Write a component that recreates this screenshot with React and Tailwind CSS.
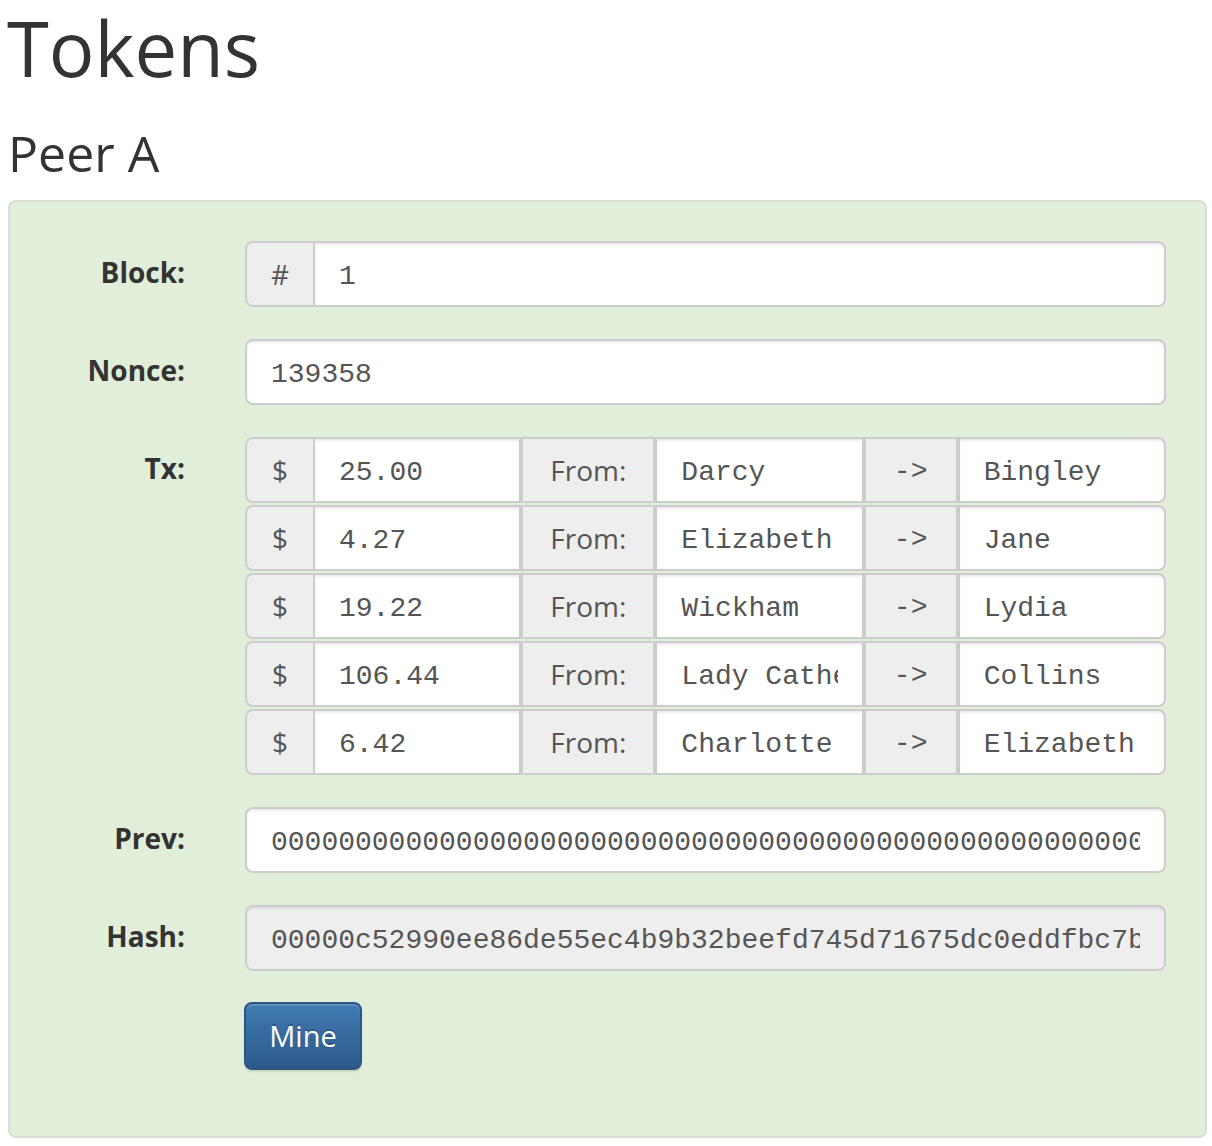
import React from "react";

const txs = [
  { amount: "25.00", from: "Darcy", to: "Bingley" },
  { amount: "4.27", from: "Elizabeth", to: "Jane" },
  { amount: "19.22", from: "Wickham", to: "Lydia" },
  { amount: "106.44", from: "Lady Catherine", to: "Collins" },
  { amount: "6.42", from: "Charlotte", to: "Elizabeth" },
];

const mono = "font-['Liberation_Mono','Courier_New',monospace] text-[28px] text-[#555]";

function Field({ value, className = "" }) {
  return (
    <div
      className={`flex items-center h-full min-w-0 px-[24px] pt-[6px] border-2 border-[#ccc] shadow-[inset_0_2px_2px_rgba(0,0,0,0.075)] ${mono} ${className}`}
    >
      <div className="flex-1 min-w-0 overflow-hidden whitespace-nowrap">{value}</div>
    </div>
  );
}

function Addon({ children, className = "" }) {
  return (
    <div
      className={`flex items-center justify-center shrink-0 h-full bg-[#eee] border-2 border-[#ccc] text-[#555] text-[28px] ${className}`}
    >
      {children}
    </div>
  );
}

function Row({ label, children }) {
  return (
    <div className="flex gap-[60px]">
      <div className="w-[175px] shrink-0 text-right font-bold text-[28px] leading-[40px] pt-[11px] text-[#333]">
        {label}
      </div>
      <div className="flex-1 min-w-0">{children}</div>
    </div>
  );
}

export default function App() {
  return (
    <div className="pl-[8px] pr-[5px] font-['Open_Sans',sans-serif] text-[#333] bg-white min-h-[1146px]">
      <h1 className="text-[76px] leading-[84px] pt-[6px] -ml-[1px] font-normal">Tokens</h1>
      <h3 className="text-[50px] leading-[55px] mt-[36px] font-normal">Peer A</h3>
      <div className="mt-[19px] bg-[#e1eed9] border-2 border-[#d9ddd5] rounded-[8px] pt-[39px] pb-[66px] pr-[39px] flex flex-col gap-[32px]">
        <Row label="Block:">
          <div className="flex h-[66px]">
            <Addon className="w-[68px] border-r-0 rounded-l-[8px]">#</Addon>
            <Field value="1" className="flex-1 rounded-r-[8px] bg-white" />
          </div>
        </Row>
        <Row label="Nonce:">
          <div className="h-[66px]">
            <Field value="139358" className="rounded-[8px] bg-white" />
          </div>
        </Row>
        <Row label="Tx:">
          <div className="flex flex-col gap-[2px]">
            {txs.map((t, i) => (
              <div key={i} className="flex h-[66px]">
                <Addon className="w-[68px] border-r-0 rounded-l-[8px]">$</Addon>
                <Field value={t.amount} className="flex-1 bg-white" />
                <Addon className="w-[134px]">From:</Addon>
                <Field value={t.from} className="flex-1 bg-white" />
                <Addon className={`w-[94px] pt-[4px] ${mono}`}>-&gt;</Addon>
                <Field value={t.to} className="flex-1 rounded-r-[8px] bg-white" />
              </div>
            ))}
          </div>
        </Row>
        <Row label="Prev:">
          <div className="h-[66px]">
            <Field
              value="0000000000000000000000000000000000000000000000000000000000000000"
              className="rounded-[8px] bg-white"
            />
          </div>
        </Row>
        <Row label="Hash:">
          <div className="h-[66px]">
            <Field
              value="00000c52990ee86de55ec4b9b32beefd745d71675dc0eddfbc7b"
              className="rounded-[8px] bg-[#eee]"
            />
          </div>
        </Row>
        <div className="flex gap-[60px] -mt-[1px]">
          <div className="w-[174px] shrink-0" />
          <button className="w-[118px] h-[68px] rounded-[8px] border-2 border-[#2b5583] bg-gradient-to-b from-[#417ab2] to-[#2c5a8b] text-white text-[29px] shadow-[inset_0_2px_0_rgba(255,255,255,0.15),0_2px_2px_rgba(0,0,0,0.1)] [text-shadow:0_-2px_0_rgba(0,0,0,0.2)]">
            Mine
          </button>
        </div>
      </div>
    </div>
  );
}
